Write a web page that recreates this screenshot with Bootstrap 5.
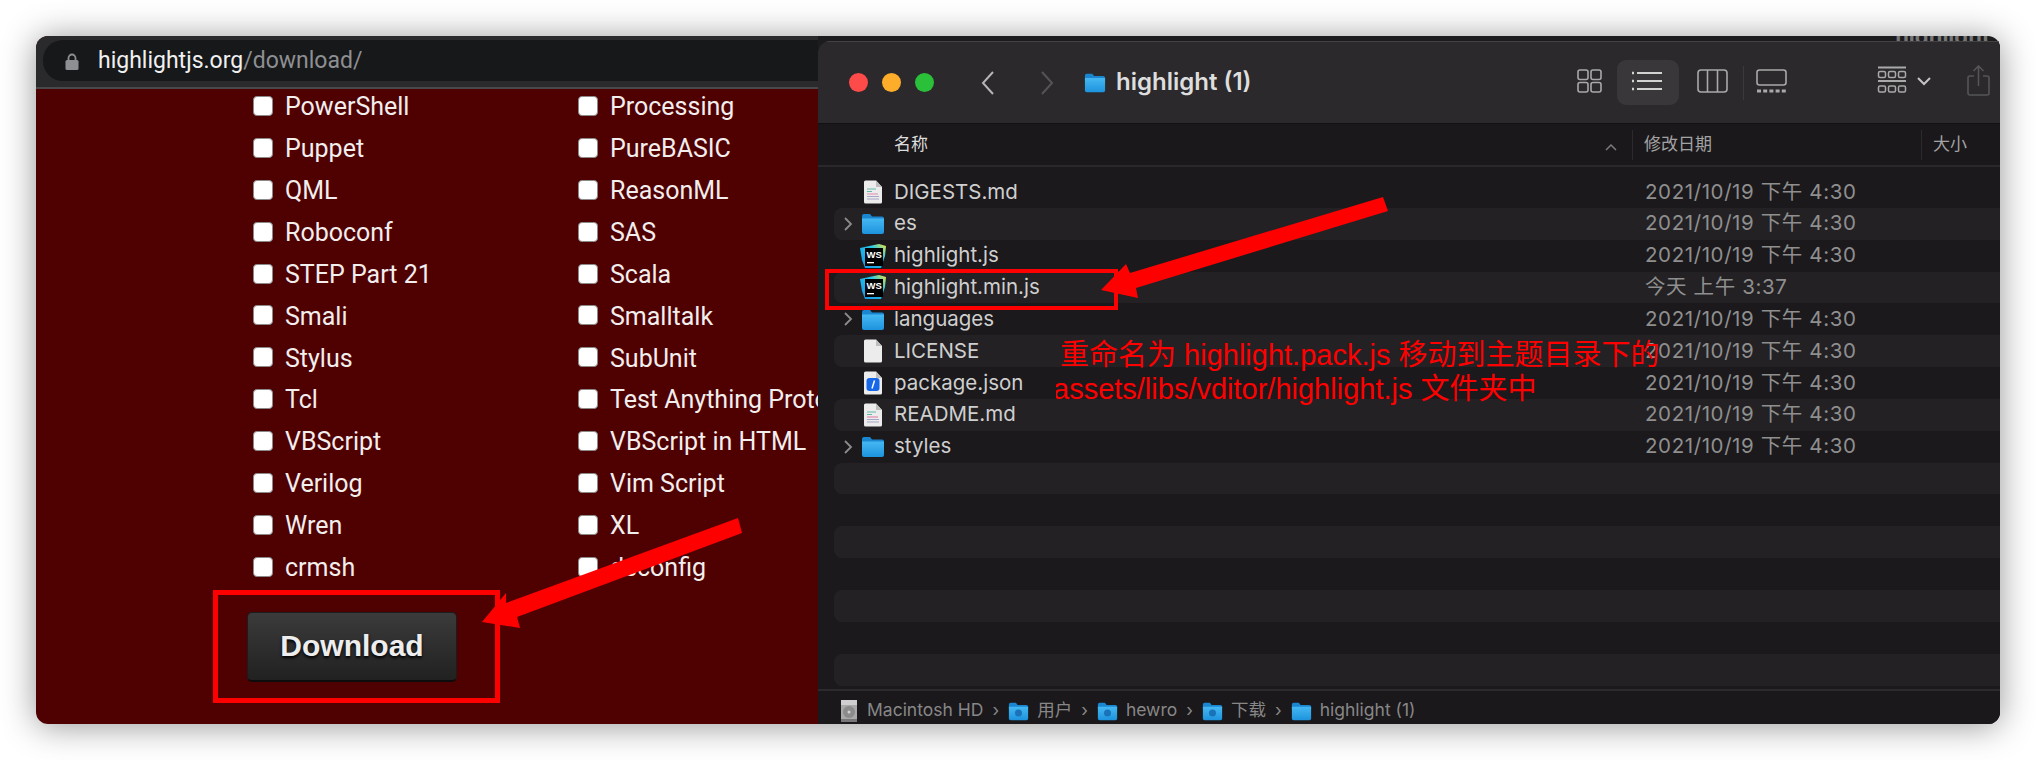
<!DOCTYPE html>
<html lang="zh">
<head>
  <meta charset="UTF-8">
  <title>highlight</title>
  <link href="https://cdn.jsdelivr.net/npm/bootstrap@5.3.2/dist/css/bootstrap.min.css" rel="stylesheet">
  <style>
    html, body { height: 760px; overflow: hidden; background: #fff; }
    .shot { position: relative; margin: 36px 0 0 36px; width: 1964px; height: 688px; border-radius: 12px; box-shadow: 0 2px 34px rgba(0,0,0,.42); }
    .shot-inner { width: 100%; height: 100%; border-radius: 12px; overflow: hidden; font-family: Inter, "Noto Sans CJK SC", sans-serif; }
    .overlay { position: absolute; left: 0; top: 0; width: 1964px; height: 688px; pointer-events: none; }

    /* browser on the left */
    .browser { width: 782px; background: #4f0000; overflow: hidden; }
    .addr-bar { height: 53px; background: #2a292c; border-bottom: 2px solid #48474a; padding: 4px 0 8px 7px; }
    .addr-pill { height: 41px; width: 900px; border-radius: 20px; background: #17181a; padding: 2px 0 0 22px; font-family: Roboto, sans-serif; font-size: 23px; color: #f0f0f0; }
    .addr-pill span { color: #8e8f92; }
    .lang-grid { display: grid; grid-template-columns: 325px 325px; grid-auto-rows: 41.9px; margin: -3px 0 0 217px; font-family: "Liberation Sans Narrow", Roboto, sans-serif; font-size: 25px; color: #f2eeee; }
    .lang-item { white-space: nowrap; margin: 0; gap: 12px; }
    .lang-item input { appearance: none; flex: none; width: 20px; height: 20px; margin: 0 0 2px; background: #fff; border: 1px solid #8a8a8a; border-radius: 4px; }
    .dl-btn { margin: 23px 0 0 211px; width: 210px; height: 70px; padding: 0; background: linear-gradient(#3b3b3b, #212121); border: 1px solid #1c1c1c; border-bottom: 2px solid #0c0c0c; border-radius: 5px; color: #eee; font: bold 30px "Liberation Sans", sans-serif; text-shadow: 0 2px 3px #000; }

    /* finder on the right */
    .right-side { flex: 1; min-width: 0; background: #1c1b1d; }
    .behind { height: 5px; overflow: hidden; padding-right: 10px; color: #777; font-size: 22px; font-weight: 700; line-height: 0; }
    .finder { height: 683px; border-radius: 12px 0 0 0; overflow: hidden; background: #1b191c; }
    .title-bar { height: 82px; background: #2b292c; border-top: 1px solid #444245; color: #c9c9c9; padding-left: 31px; }
    .light { width: 19px; height: 19px; border-radius: 50%; margin-right: 14px; }
    .title-text { font-size: 24px; font-weight: 600; color: #dedede; margin-left: 10px; margin-top: -2px; }
    .tb-icon { position: absolute; top: 0; }
    .tb-sel { position: absolute; left: 799px; top: 18px; width: 62px; height: 45px; border-radius: 9px; background: #39373a; }
    .head-row { position: relative; height: 44px; border-top: 1px solid #111; border-bottom: 2px solid #2a282b; background: #1a181b; font-size: 17px; color: #a3a3a3; }
    .head-row span { position: absolute; top: 8px; }
    .head-line { position: absolute; top: 6px; width: 1px; height: 30px; background: #2c2a2d; }
    .file-list { padding: 9px 0 0 16px; height: 522px; }
    .file-row { height: 31.85px; padding-left: 8px; font-size: 20.5px; color: #cfcfcf; }
    .file-row:nth-child(even) { background: #232124; border-radius: 8px 0 0 8px; }
    .file-row:last-child { border-radius: 8px 0 0 8px; }
    .expander { width: 18px; flex: none; }
    .file-ico { width: 26px; flex: none; margin: 0 8px 0 0; display: flex; justify-content: center; }
    .file-name { width: 751px; flex: none; }
    .file-date { color: #8f8f8f; white-space: nowrap; letter-spacing: .6px; }
    .status-bar { height: 35px; border-top: 2px solid #2c2a2d; background: #1a181b; padding: 6px 0 0 21px; font-size: 17.5px; color: #878787; gap: 8px; }
    .status-bar .sep { margin: 0 1px; }

    .red-note { position: absolute; color: #f00; font-size: 29px; line-height: 34px; white-space: nowrap; font-family: "Liberation Sans", "Noto Sans CJK SC", sans-serif; }
    .note-one { left: 1024px; top: 302px; }
    .note-two { left: 1020px; top: 336px; overflow: hidden; width: 510px; }
    .note-two span { display: block; margin-left: -3px; }
  </style>
</head>
<body>
  <svg width="0" height="0" class="d-block">
    <defs>
      <linearGradient id="blueGrad" x1="0" y1="0" x2="0" y2="1"><stop offset="0" stop-color="#45b8f2"/><stop offset="1" stop-color="#1d93de"/></linearGradient>
      <linearGradient id="wsGrad" x1="0" y1="1" x2="1" y2="0"><stop offset="0" stop-color="#1a8fe8"/><stop offset=".65" stop-color="#21c8ea"/><stop offset="1" stop-color="#f5e63c"/></linearGradient>
      <symbol id="ic-folder" viewBox="0 0 24 21">
        <path d="M1 3a2 2 0 0 1 2-2h6l2 2.5h10a2 2 0 0 1 2 2V8H1z" fill="#1b86d0"/>
        <path d="M1 5.500h22V19a2 2 0 0 1-2 2H3a2 2 0 0 1-2-2z" fill="url(#blueGrad)"/>
      </symbol>
      <symbol id="ic-page" viewBox="0 0 20 24">
        <path d="M1 2a1.500 1.500 0 0 1 1.500-1.500H13L19 7v15a1.500 1.500 0 0 1-1.500 1.500h-15A1.500 1.500 0 0 1 1 22z" fill="#ececec"/>
        <path d="M13 .5V7h6z" fill="#bdbdbd"/>
      </symbol>
      <symbol id="ic-doc" viewBox="0 0 20 24">
        <use href="#ic-page"/>
        <path d="M4 9h9M4 11.500h5" stroke="#63b9a8" stroke-width="1.200"/>
        <path d="M4 14h11" stroke="#e08ab0" stroke-width="1.200"/>
        <path d="M4 16.500h12M4 19h12" stroke="#a6a6c8" stroke-width="1.200"/>
      </symbol>
      <symbol id="ic-json" viewBox="0 0 20 24">
        <use href="#ic-page"/>
        <rect x="3.500" y="7" width="13" height="13" rx="3" fill="#1668e8"/>
        <path d="M11.500 9.500l-2.500 8" stroke="#fff" stroke-width="1.500"/>
      </symbol>
      <symbol id="ic-ws" viewBox="0 0 26 24">
        <path d="M0 4l14-3 5-1 7 2-1 10-4 12H5L2 16z" fill="url(#wsGrad)"/>
        <rect x="5" y="4" width="18" height="18" fill="#000"/>
        <text x="6.500" y="14" font-size="9.500" font-weight="700" fill="#fff" font-family="Liberation Sans, sans-serif">WS</text>
        <rect x="7" y="18" width="7" height="1.300" fill="#fff"/>
      </symbol>
      <symbol id="ic-hd" viewBox="0 0 20 24">
        <rect x="2" y="1" width="16" height="22" rx="2" fill="#a9a9a9"/>
        <rect x="2" y="1" width="16" height="5" fill="#cfcfcf"/>
        <circle cx="10" cy="13" r="6" fill="#8b8b8b"/>
        <circle cx="10" cy="13" r="1.500" fill="#d0d0d0"/>
        <rect x="2" y="20" width="16" height="3" fill="#777"/>
      </symbol>
      <symbol id="ic-sfolder" viewBox="0 0 21 24">
        <use href="#ic-folder" width="21" height="24"/>
        <circle cx="10.500" cy="14" r="3.500" fill="#1a73b8"/>
      </symbol>
    </defs>
  </svg>

  <div class="shot">
    <div class="shot-inner d-flex">

      <div class="browser flex-shrink-0">
        <div class="addr-bar">
          <div class="addr-pill d-flex align-items-center">
            <svg width="14" height="17" viewBox="0 0 14 17" style="margin-right:19px"><path d="M3.500 8V5a3.500 3.500 0 0 1 7 0v3" fill="none" stroke="#8e8f92" stroke-width="1.800"/><rect x="0.500" y="7" width="13" height="10" rx="1.500" fill="#8e8f92"/></svg>
            <div>highlightjs.org<span>/download/</span></div>
          </div>
        </div>
        <div class="lang-grid">
          <label class="lang-item d-flex align-items-center"><input type="checkbox">PowerShell</label>
          <label class="lang-item d-flex align-items-center"><input type="checkbox">Processing</label>
          <label class="lang-item d-flex align-items-center"><input type="checkbox">Puppet</label>
          <label class="lang-item d-flex align-items-center"><input type="checkbox">PureBASIC</label>
          <label class="lang-item d-flex align-items-center"><input type="checkbox">QML</label>
          <label class="lang-item d-flex align-items-center"><input type="checkbox">ReasonML</label>
          <label class="lang-item d-flex align-items-center"><input type="checkbox">Roboconf</label>
          <label class="lang-item d-flex align-items-center"><input type="checkbox">SAS</label>
          <label class="lang-item d-flex align-items-center"><input type="checkbox">STEP Part 21</label>
          <label class="lang-item d-flex align-items-center"><input type="checkbox">Scala</label>
          <label class="lang-item d-flex align-items-center"><input type="checkbox">Smali</label>
          <label class="lang-item d-flex align-items-center"><input type="checkbox">Smalltalk</label>
          <label class="lang-item d-flex align-items-center"><input type="checkbox">Stylus</label>
          <label class="lang-item d-flex align-items-center"><input type="checkbox">SubUnit</label>
          <label class="lang-item d-flex align-items-center"><input type="checkbox">Tcl</label>
          <label class="lang-item d-flex align-items-center"><input type="checkbox">Test Anything Protocol</label>
          <label class="lang-item d-flex align-items-center"><input type="checkbox">VBScript</label>
          <label class="lang-item d-flex align-items-center"><input type="checkbox">VBScript in HTML</label>
          <label class="lang-item d-flex align-items-center"><input type="checkbox">Verilog</label>
          <label class="lang-item d-flex align-items-center"><input type="checkbox">Vim Script</label>
          <label class="lang-item d-flex align-items-center"><input type="checkbox">Wren</label>
          <label class="lang-item d-flex align-items-center"><input type="checkbox">XL</label>
          <label class="lang-item d-flex align-items-center"><input type="checkbox">crmsh</label>
          <label class="lang-item d-flex align-items-center"><input type="checkbox">dsconfig</label>
        </div>
        <button class="btn dl-btn d-block">Download</button>
      </div>

      <div class="right-side">
        <div class="behind d-flex justify-content-end">highlight</div>
        <div class="finder">
          <div class="title-bar d-flex align-items-center position-relative">
            <div class="light" style="background:#fd4b4a"></div>
            <div class="light" style="background:#fdad2a"></div>
            <div class="light" style="background:#2ac03a"></div>
            <svg width="16" height="26" viewBox="0 0 16 26" style="margin-left:32px"><path d="M13 2L3 13l10 11" fill="none" stroke="#b5b5b5" stroke-width="2"/></svg>
            <svg width="16" height="26" viewBox="0 0 16 26" style="margin-left:43px"><path d="M3 2l10 11L3 24" fill="none" stroke="#545356" stroke-width="2"/></svg>
            <svg width="22" height="21" style="margin-left:29px"><use href="#ic-folder"/></svg>
            <div class="title-text">highlight (1)</div>

            <div class="tb-sel"></div>
            <svg class="tb-icon" style="left:759px;top:27px" width="25" height="24" viewBox="0 0 25 24" fill="none" stroke="#a9a9a9" stroke-width="1.600"><rect x="1" y="1" width="10" height="9.500" rx="2"/><rect x="14" y="1" width="10" height="9.500" rx="2"/><rect x="1" y="13.500" width="10" height="9.500" rx="2"/><rect x="14" y="13.500" width="10" height="9.500" rx="2"/></svg>
            <svg class="tb-icon" style="left:814px;top:28px" width="30" height="22" viewBox="0 0 30 22" fill="none" stroke="#d2d2d2" stroke-width="2"><path d="M5 3h25M5 11h25M5 19h25"/><path d="M0 3h2M0 11h2M0 19h2" stroke-width="2.500"/></svg>
            <svg class="tb-icon" style="left:879px;top:27px" width="31" height="24" viewBox="0 0 31 24" fill="none" stroke="#a9a9a9" stroke-width="1.600"><rect x="1" y="1" width="29" height="22" rx="3"/><path d="M10.500 1v22M20.500 1v22"/></svg>
            <div class="position-absolute" style="left:925px;top:24px;width:1px;height:34px;background:#3b393c"></div>
            <svg class="tb-icon" style="left:938px;top:27px" width="31" height="24" viewBox="0 0 31 24" fill="none" stroke="#a9a9a9" stroke-width="1.600"><rect x="1" y="1" width="29" height="15" rx="2.500"/><path d="M1 22h29" stroke-width="3" stroke-dasharray="4 2.200"/></svg>
            <svg class="tb-icon" style="left:1059px;top:24px" width="30" height="29" viewBox="0 0 30 29" fill="none" stroke="#a9a9a9" stroke-width="1.500"><path d="M1 1.500h28M1 15h28" stroke-width="2"/><rect x="1.500" y="5.500" width="7" height="6" rx="1.500"/><rect x="11.500" y="5.500" width="7" height="6" rx="1.500"/><rect x="21.500" y="5.500" width="7" height="6" rx="1.500"/><rect x="1.500" y="20" width="7" height="6" rx="1.500"/><rect x="11.500" y="20" width="7" height="6" rx="1.500"/><rect x="21.500" y="20" width="7" height="6" rx="1.500"/></svg>
            <svg class="tb-icon" style="left:1099px;top:35px" width="14" height="9" viewBox="0 0 14 9" fill="none" stroke="#c4c4c4" stroke-width="2"><path d="M1 1l6 6 6-6"/></svg>
            <svg class="tb-icon" style="left:1149px;top:23px" width="23" height="31" viewBox="0 0 23 31" fill="none" stroke="#555457" stroke-width="1.600"><path d="M7 11H3a2 2 0 0 0-2 2v15a2 2 0 0 0 2 2h17a2 2 0 0 0 2-2V13a2 2 0 0 0-2-2h-4M11.500 21V1M6.500 6l5-5 5 5"/></svg>
          </div>

          <div class="head-row">
            <span style="left:76px;color:#dcdcdc">名称</span>
            <svg class="position-absolute" style="left:787px;top:19px" width="12" height="8" viewBox="0 0 12 8" fill="none" stroke="#7b7b7b" stroke-width="1.500"><path d="M1 7l5-5 5 5"/></svg>
            <div class="head-line" style="left:814px"></div>
            <span style="left:826px">修改日期</span>
            <div class="head-line" style="left:1103px"></div>
            <span style="left:1115px">大小</span>
          </div>

          <div class="file-list">
            <div class="file-row d-flex align-items-center"><div class="expander"></div><div class="file-ico"><svg width="20" height="24"><use href="#ic-doc"/></svg></div><div class="file-name">DIGESTS.md</div><div class="file-date">2021/10/19 下午 4:30</div></div>
            <div class="file-row d-flex align-items-center"><svg class="expander" height="16" viewBox="0 0 14 16" fill="none" stroke="#8c8c8c" stroke-width="1.800"><path d="M1 2l6 6-6 6"/></svg><div class="file-ico"><svg width="24" height="21"><use href="#ic-folder"/></svg></div><div class="file-name">es</div><div class="file-date">2021/10/19 下午 4:30</div></div>
            <div class="file-row d-flex align-items-center"><div class="expander"></div><div class="file-ico"><svg width="26" height="24"><use href="#ic-ws"/></svg></div><div class="file-name">highlight.js</div><div class="file-date">2021/10/19 下午 4:30</div></div>
            <div class="file-row d-flex align-items-center"><div class="expander"></div><div class="file-ico"><svg width="26" height="24"><use href="#ic-ws"/></svg></div><div class="file-name">highlight.min.js</div><div class="file-date">今天 上午 3:37</div></div>
            <div class="file-row d-flex align-items-center"><svg class="expander" height="16" viewBox="0 0 14 16" fill="none" stroke="#8c8c8c" stroke-width="1.800"><path d="M1 2l6 6-6 6"/></svg><div class="file-ico"><svg width="24" height="21"><use href="#ic-folder"/></svg></div><div class="file-name">languages</div><div class="file-date">2021/10/19 下午 4:30</div></div>
            <div class="file-row d-flex align-items-center"><div class="expander"></div><div class="file-ico"><svg width="20" height="24"><use href="#ic-page"/></svg></div><div class="file-name">LICENSE</div><div class="file-date">2021/10/19 下午 4:30</div></div>
            <div class="file-row d-flex align-items-center"><div class="expander"></div><div class="file-ico"><svg width="20" height="24"><use href="#ic-json"/></svg></div><div class="file-name">package.json</div><div class="file-date">2021/10/19 下午 4:30</div></div>
            <div class="file-row d-flex align-items-center"><div class="expander"></div><div class="file-ico"><svg width="20" height="24"><use href="#ic-doc"/></svg></div><div class="file-name">README.md</div><div class="file-date">2021/10/19 下午 4:30</div></div>
            <div class="file-row d-flex align-items-center"><svg class="expander" height="16" viewBox="0 0 14 16" fill="none" stroke="#8c8c8c" stroke-width="1.800"><path d="M1 2l6 6-6 6"/></svg><div class="file-ico"><svg width="24" height="21"><use href="#ic-folder"/></svg></div><div class="file-name">styles</div><div class="file-date">2021/10/19 下午 4:30</div></div>
            <div class="file-row"></div>
            <div class="file-row"></div>
            <div class="file-row"></div>
            <div class="file-row"></div>
            <div class="file-row"></div>
            <div class="file-row"></div>
            <div class="file-row"></div>
          </div>

          <div class="status-bar d-flex align-items-center">
            <svg width="20" height="24"><use href="#ic-hd"/></svg><span>Macintosh HD</span><span class="sep">›</span>
            <svg width="21" height="24"><use href="#ic-sfolder"/></svg><span>用户</span><span class="sep">›</span>
            <svg width="21" height="24"><use href="#ic-sfolder"/></svg><span>hewro</span><span class="sep">›</span>
            <svg width="21" height="24"><use href="#ic-sfolder"/></svg><span>下载</span><span class="sep">›</span>
            <svg width="21" height="24"><use href="#ic-folder"/></svg><span>highlight (1)</span>
          </div>
        </div>
      </div>
    </div>

    <svg class="overlay" viewBox="36 36 1964 688">
      <rect x="215.500" y="592.500" width="282" height="108" fill="none" stroke="#f00" stroke-width="5"/>
      <polygon points="738,518 742,533 517,617 520,628 482,622 506,593 506,603" fill="#f00"/>
      <rect x="827" y="271" width="289" height="37" fill="none" stroke="#f00" stroke-width="4"/>
      <polygon points="1383,197 1388,211 1136,288 1138,298 1101,290 1126,264 1130,273" fill="#f00"/>
    </svg>
    <div class="red-note note-one">重命名为 highlight.pack.js 移动到主题目录下的</div>
    <div class="red-note note-two"><span>assets/libs/vditor/highlight.js 文件夹中</span></div>
  </div>
  <script src="https://cdn.jsdelivr.net/npm/bootstrap@5.3.2/dist/js/bootstrap.bundle.min.js"></script>
</body>
</html>
